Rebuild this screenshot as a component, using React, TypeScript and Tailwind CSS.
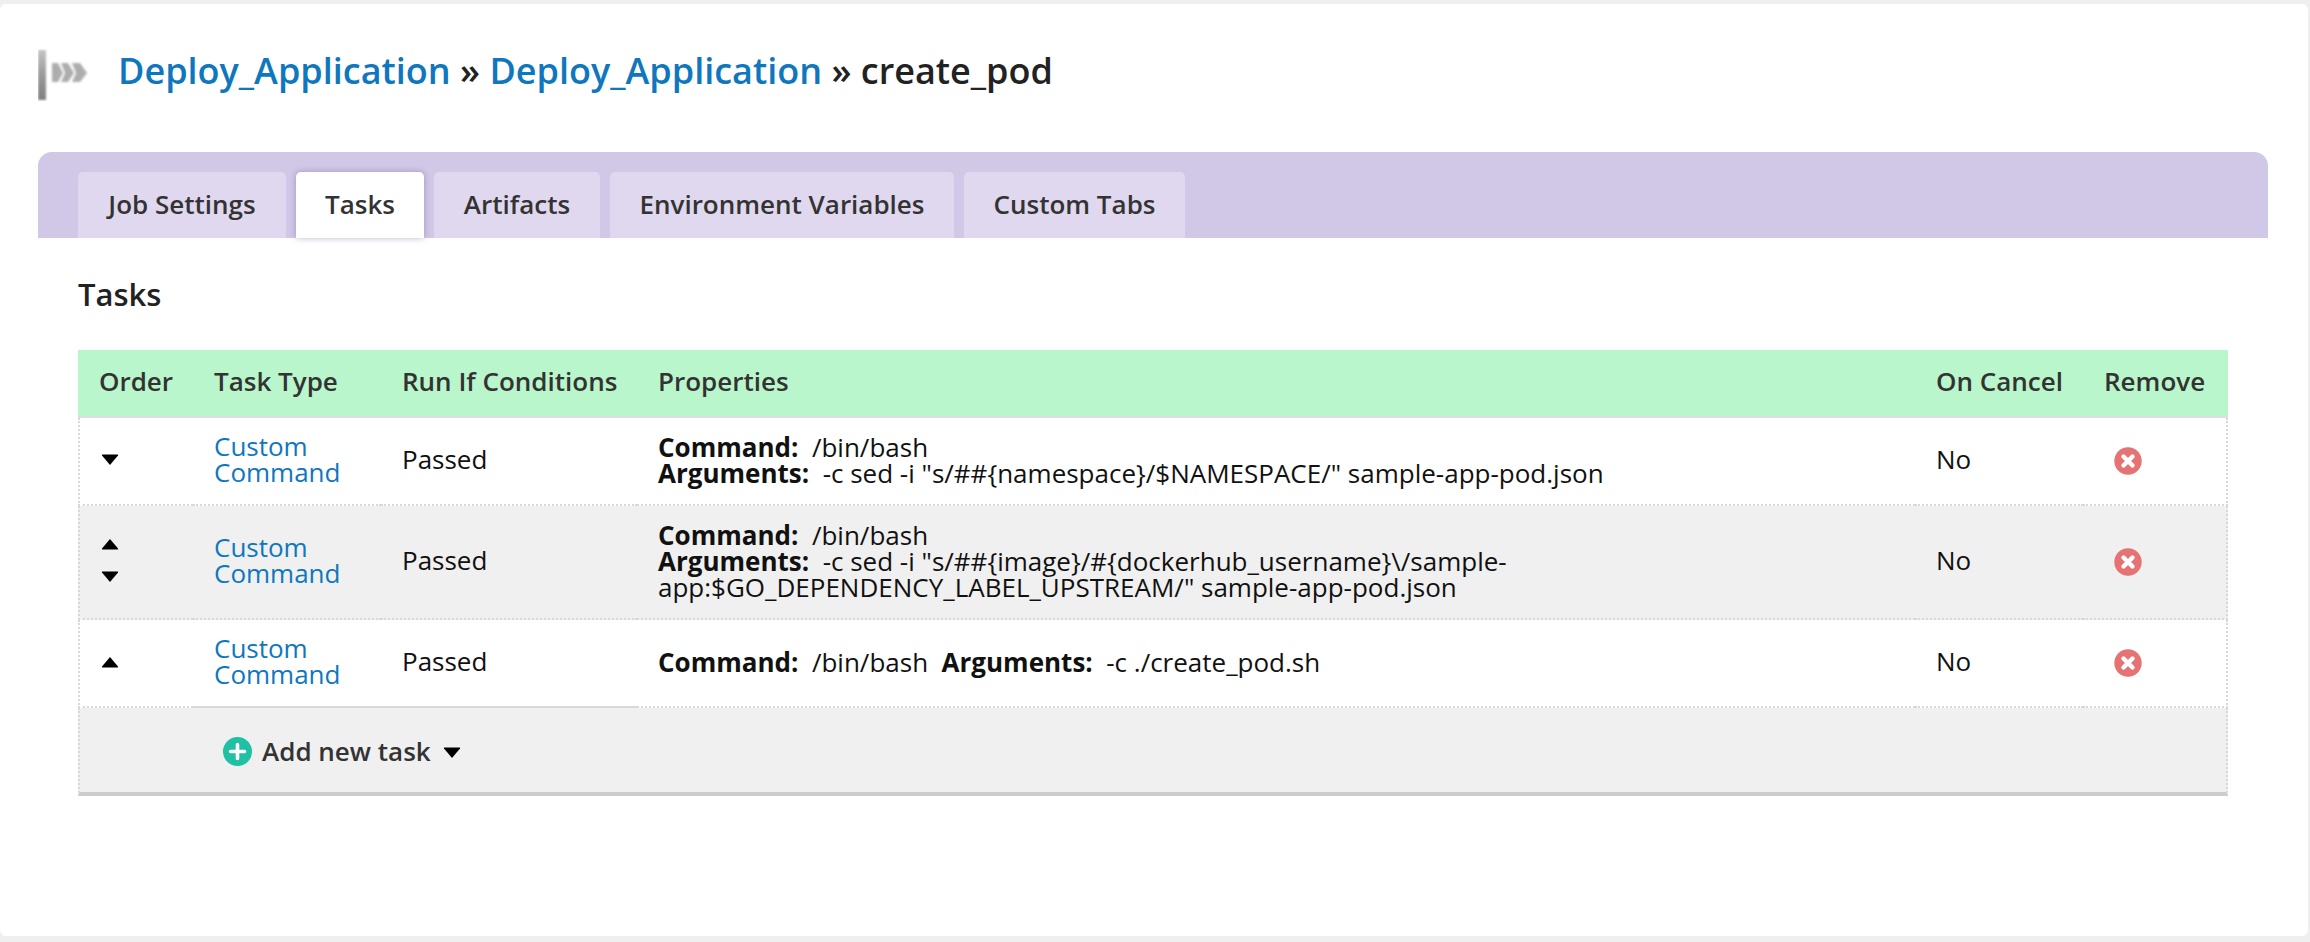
import React from "react";

const Up = () => (
  <svg width="18" height="12" viewBox="0 0 18 12" className="block"><path d="M9 1 L17 10.5 Q17.5 11.5 16.5 11.5 L1.5 11.5 Q0.5 11.5 1 10.5 Z" fill="#000" /></svg>
);
const Down = () => (
  <svg width="18" height="12" viewBox="0 0 18 12" className="block"><path d="M1.5 0.5 L16.5 0.5 Q17.5 0.5 17 1.5 L9 11 L1 1.5 Q0.5 0.5 1.5 0.5 Z" fill="#000" /></svg>
);
const Remove = () => (
  <svg width="28" height="28" viewBox="0 0 28 28" className="block">
    <circle cx="14" cy="14" r="13.7" fill="#e57373" />
    <path d="M9.5 9.5 L18.5 18.5 M18.5 9.5 L9.5 18.5" stroke="#fff" strokeWidth="4.4" strokeLinecap="round" />
  </svg>
);
const Plus = () => (
  <svg width="29" height="29" viewBox="0 0 29 29" className="block">
    <circle cx="14.5" cy="14.5" r="14.5" fill="#1fc0a3" />
    <path d="M14.5 7.5 V21.5 M7.5 14.5 H21.5" stroke="#fff" strokeWidth="3.6" strokeLinecap="round" />
  </svg>
);
const Logo = () => (
  <svg width="52" height="52" viewBox="0 0 52 52" className="block shrink-0">
    <defs>
      <linearGradient id="barg" x1="0" y1="0" x2="0" y2="1">
        <stop offset="0" stopColor="#c4c4c4" />
        <stop offset="0.5" stopColor="#9a9a9a" />
        <stop offset="1" stopColor="#7f7f7f" />
      </linearGradient>
      <filter id="soft" x="-20%" y="-20%" width="140%" height="140%"><feGaussianBlur stdDeviation="0.8" /></filter>
    </defs>
    <g filter="url(#soft)">
      <rect x="0" y="1" width="8" height="50" fill="url(#barg)" />
      <path d="M14 14 H20 L25 24 L20 33 H14 Z" fill="#adadad" />
      <path d="M23 14 H30 L36 24 L30 33 H23 L27 24 Z" fill="#adadad" />
      <path d="M34 14 H42 L49 24 L42 33 H34 L38 24 Z" fill="#adadad" />
    </g>
  </svg>
);

const tabs = [
  { t: "Job Settings", w: "w-[208px]" },
  { t: "Tasks", w: "w-[128px]" },
  { t: "Artifacts", w: "w-[166px]" },
  { t: "Environment Variables", w: "w-[344px]" },
  { t: "Custom Tabs", w: "w-[221px]" },
];
const heads = ["Order", "Task Type", "Run If Conditions", "Properties", "On Cancel", "Remove"];

const dot = "border-b-2 border-dotted border-b-[#d8d8d8]";
const cellPad = "pl-[21px] pr-0 align-middle";

function Row({ bg, h, arrows, props, solid }: { bg: string; h: string; arrows: React.ReactNode; props: React.ReactNode; solid?: boolean }) {
  const mid = solid ? "border-b-2 border-solid border-b-[#d8d8d8]" : dot;
  return (
    <tr className={`${bg} ${h}`}>
      <td className={`${dot} ${cellPad} border-l-2 border-l-[#d8d8d8] border-dotted pb-[3px]`}>{arrows}</td>
      <td className={`${mid} ${cellPad} leading-[26px] pb-[4px]`}>
        <a className="text-[#0f77bd]">Custom<br />Command</a>
      </td>
      <td className={`${mid} ${cellPad} pb-[4px]`}>Passed</td>
      <td className={`${dot} ${cellPad} leading-[26px] pb-[3px]`}>{props}</td>
      <td className={`${dot} ${cellPad} pb-[4px]`}>No</td>
      <td className={`${dot} border-r-2 border-r-[#d8d8d8] border-dotted pl-[31px] align-middle`}><Remove /></td>
    </tr>
  );
}

const B = ({ children }: { children: React.ReactNode }) => <b className="font-bold">{children}</b>;

export default function App() {
  return (
    <div className="min-h-screen bg-[#efefef] pt-1 pr-[2px] pb-[6px] font-['Open_Sans',sans-serif] text-[#111]">
      <div className="h-[932px] bg-white rounded-[6px] pl-[38px] pr-[40px] pt-[45px]">
        <div className="flex items-center gap-[28px] h-[52px] text-[36px] font-semibold text-[#222]">
          <Logo />
          <h1 className="whitespace-pre -mt-[8px]">
            <a className="text-[#0f77bd]">Deploy_Application</a> » <a className="text-[#0f77bd]">Deploy_Application</a> » create_pod
          </h1>
        </div>
        <div className="mt-[51px] h-[86px] bg-[#d1c7e6] rounded-t-[14px] pt-[20px] px-[40px] flex gap-[10px]">
          {tabs.map((x, i) => (
            <div
              key={x.t}
              className={`${x.w} h-[66px] pb-[2px] flex items-center justify-center rounded-t-[5px] text-[26px] font-semibold text-[#333] ${i === 1 ? "bg-white shadow-[0_0_6px_rgba(90,70,140,0.4)]" : "bg-[#dfd8ef]"}`}
            >
              {x.t}
            </div>
          ))}
        </div>
        <div className="px-[40px]">
          <h2 className="mt-[36px] h-[40px] leading-[40px] text-[31px] font-semibold text-[#222]">Tasks</h2>
          <table className="mt-[36px] w-[2150px] table-fixed border-separate border-spacing-0 text-[26px] text-[#111]">
            <colgroup>
              <col className="w-[115px]" />
              <col className="w-[188px]" />
              <col className="w-[256px]" />
              <col className="w-[1278px]" />
              <col className="w-[168px]" />
              <col className="w-[145px]" />
            </colgroup>
            <thead>
              <tr className="h-[68px] bg-[#baf6cb]">
                {heads.map((h) => (
                  <th key={h} className="pl-[21px] pr-0 pb-[3px] text-left font-semibold text-[#333] border-b-2 border-b-[#dedede] whitespace-nowrap">{h}</th>
                ))}
              </tr>
            </thead>
            <tbody>
              <Row
                bg="bg-white"
                h="h-[88px]"
                arrows={<Down />}
                props={<><B>Command:</B>{"\u00a0 /bin/bash"}<br /><B>Arguments:</B>{"\u00a0 -c sed -i \"s/##{namespace}/$NAMESPACE/\" sample-app-pod.json"}</>}
              />
              <Row
                bg="bg-[#f0f0f0]"
                h="h-[114px]"
                arrows={<div className="flex flex-col gap-[21px]"><Up /><Down /></div>}
                props={<><B>Command:</B>{"\u00a0 /bin/bash"}<br /><B>Arguments:</B>{"\u00a0 -c sed -i \"s/##{image}/#{dockerhub_username}\\/sample-"}<br />{"app:$GO_DEPENDENCY_LABEL_UPSTREAM/\" sample-app-pod.json"}</>}
              />
              <Row
                bg="bg-white"
                h="h-[88px]"
                solid
                arrows={<Up />}
                props={<><B>Command:</B>{"\u00a0 /bin/bash\u00a0 "}<B>Arguments:</B>{"\u00a0 -c ./create_pod.sh"}</>}
              />
              <tr className="h-[88px] bg-[#f0f0f0]">
                <td colSpan={6} className="[border-style:none_dotted_solid_dotted] border-x-2 border-b-4 border-x-[#d8d8d8] border-b-[#cccccc] pl-[143px] pt-[3px] align-middle">
                  <div className="flex items-center gap-[10px] text-[26px] font-semibold text-[#333]">
                    <Plus />
                    <span>Add new task</span>
                    <span className="ml-[2px] pt-[2px]"><Down /></span>
                  </div>
                </td>
              </tr>
            </tbody>
          </table>
        </div>
      </div>
    </div>
  );
}
